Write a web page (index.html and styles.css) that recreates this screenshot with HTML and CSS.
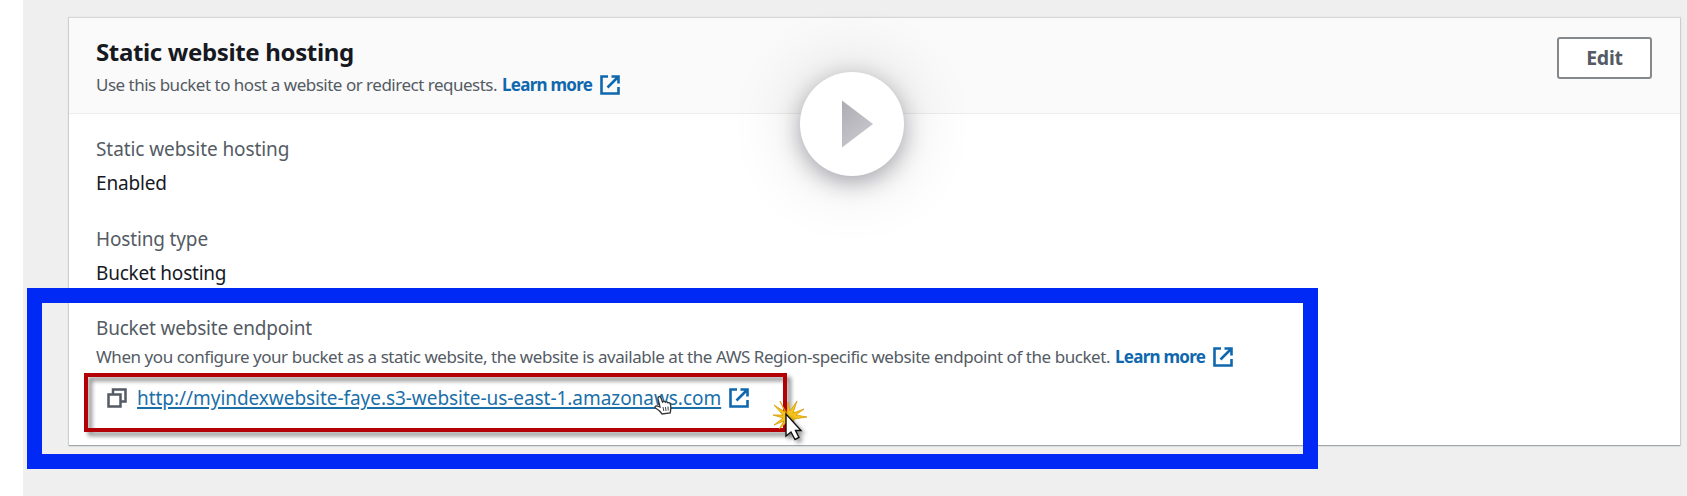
FILE: index.html
```html
<!DOCTYPE html>
<html lang="en">
<head>
<meta charset="utf-8">
<title>Static website hosting</title>
<link rel="stylesheet" href="styles.css">
</head>
<body>
<svg class="defs" width="0" height="0">
  <symbol id="external" viewBox="0 0 20 20"><path d="M8 1.500H1.500V18.500H18.500V12M11.500 1.500H18.500V8.500M18 2L7.500 12.500" fill="none" stroke="currentColor" stroke-width="2.6"/></symbol>
</svg>
<main class="page">
  <section class="card">
    <header class="card-header">
      <div>
        <h1 class="title">Static website hosting</h1>
        <p class="desc"><span class="desc-a">Use this bucket to host a website or redirect requests.</span><a class="more">Learn more</a><svg class="ext"><use href="#external"/></svg></p>
      </div>
      <button class="edit">Edit</button>
    </header>
    <div class="card-body">
      <div class="field">
        <div class="label label-a">Static website hosting</div>
        <div class="value">Enabled</div>
      </div>
      <div class="field">
        <div class="label">Hosting type</div>
        <div class="value value-b">Bucket hosting</div>
      </div>
      <div class="field field-endpoint">
        <div class="label label-c">Bucket website endpoint</div>
        <p class="desc"><span class="desc-b">When you configure your bucket as a static website, the website is available at the AWS Region-specific website endpoint of the bucket.</span><a class="more">Learn more</a><svg class="ext"><use href="#external"/></svg></p>
        <div class="endpoint">
          <svg class="copy" viewBox="0 0 20 20"><path d="M1.500 6.500H13.500V18.500H1.500ZM6 6V1.500H18.500V13.500H14" fill="none" stroke="currentColor" stroke-width="2.5"/></svg>
          <a class="url">http://myindexwebsite-faye.s3-website-us-east-1.amazonaws.com</a>
          <svg class="ext"><use href="#external"/></svg>
        </div>
      </div>
    </div>
  </section>
</main>
<div class="blue-frame"></div>
<div class="red-frame"></div>
<div class="play"><svg width="104" height="104" viewBox="0 0 104 104"><defs><linearGradient id="tri" x1="0" y1="0" x2="0.6" y2="1"><stop offset="0" stop-color="#acacb2"/><stop offset="1" stop-color="#c8c8ce"/></linearGradient></defs><path d="M42 28.500L73 52L42 75.500Z" fill="url(#tri)"/></svg></div>
<svg class="hand" viewBox="0 0 18 20"><path d="M4.500 2C5.500 1 6.500 1.500 7 3L8.500 7C9.500 6 11 6.300 11.400 7.200C12.300 6.500 13.500 6.800 14 7.800C15.200 7.300 16.200 8 16.500 9.500C17 12 17 14 16.200 18L8 19C6.500 16 4 14.500 1.500 13C.5 12 1.500 10.700 3 11L6 12L4 4C3.800 3 4 2.500 4.500 2Z" fill="#fff" stroke="#333" stroke-width="1.3"/><path d="M9 12L9.800 16M11.500 12L12 16M14 11.500L14.200 15.500" stroke="#444"/></svg>
<svg class="click" viewBox="0 0 42 46"><path d="M14 13L7 0L12 11L1 4L10 14L0 14L10 17L1 24L11 20L6 28L14 21L20 26L21 18L34 16L23 14L31 8L20 12L24 0L17 10L15 1Z" fill="#f6c51c" stroke="#d79b08" stroke-width=".8"/><path class="arrow" d="M13 13V35L18 31L22 38.500L26 36.500L22.500 29.500H28Z" fill="#fff" stroke="#111" stroke-width="1.4"/></svg>
</body>
</html>
```
FILE: styles.css
```css
* { box-sizing: border-box; }
body { margin: 0; width: 1687px; height: 496px; overflow: hidden; position: relative; background: #fff; font-family: "Noto Sans", "Open Sans", sans-serif; color: #16191f; }
.defs { position: absolute; }
.page { height: 496px; margin-left: 23px; padding: 18px 7px 0 46px; background: #efefef; }
.card { height: 427px; background: #fff; box-shadow: 0 1px 1px 0 #a0a8a9, 0 0 1px 1px #d6d6d6; }
.card-header { display: flex; justify-content: space-between; align-items: flex-start; height: 96px; padding: 18px 28px 0 27px; background: #fafafa; border-bottom: 1px solid #ececec; }
.title { margin: 0; font-size: 24px; line-height: 32px; font-weight: 700; letter-spacing: -0.35px; }
.desc { display: flex; align-items: center; margin: 5px 0 0; height: 24px; line-height: 24px; font-size: 17px; color: #545b64; white-space: nowrap; }
.desc-a { letter-spacing: -0.5px; width: 406px; }
.desc-b { letter-spacing: -0.45px; width: 1019px; }
.more { font-weight: 700; color: #0f68ae; letter-spacing: -0.73px; width: 98px; }
.ext { width: 20px; height: 20px; color: #0f68ae; flex: none; }
.edit { width: 95px; height: 42px; margin-top: 1px; padding: 0; border: 2px solid #85888b; border-radius: 3px; background: #fff; font: 700 19.5px/38px "Noto Sans", sans-serif; letter-spacing: -0.2px; color: #545b64; }
.card-body { display: flex; flex-direction: column; gap: 28px; padding: 21px 28px 0 27px; }
.field { white-space: nowrap; }
.field-endpoint { margin-top: -1px; }
.label, .value { height: 28px; line-height: 28px; font-size: 19px; letter-spacing: -0.15px; }
.label-a { letter-spacing: -0.08px; }
.label-c { letter-spacing: -0.2px; }
.value-b { letter-spacing: -0.22px; }
.label { color: #545b64; }
.value { margin-top: 6px; }
.field .desc { margin-top: 3px; }
.endpoint { display: flex; align-items: center; height: 28px; margin: 15px 0 0 11px; }
.copy { width: 20px; height: 20px; color: #545b64; }
.url { width: 592px; margin-left: 10px; font-size: 19px; line-height: 28px; letter-spacing: -0.05px; color: #1b6fa8; text-decoration: underline; text-decoration-thickness: 1.5px; text-underline-offset: 2px; }
.blue-frame { position: absolute; left: 27px; top: 288px; width: 1291px; height: 181px; border: 15px solid #0029f5; }
.red-frame { position: absolute; left: 84px; top: 373px; width: 703px; height: 59px; border: 4px solid #b20006; filter: drop-shadow(4px 4px 2px rgba(0,0,0,.45)); }
.play { position: absolute; left: 800px; top: 72px; width: 104px; height: 104px; border-radius: 50%; background: #fff; box-shadow: 0 6px 22px rgba(25,22,45,.34), 0 0 75px rgba(0,0,0,.16); }
.hand { position: absolute; left: 654px; top: 395px; width: 18px; height: 20px; }
.click { position: absolute; left: 773px; top: 401px; width: 42px; height: 46px; overflow: visible; }
.arrow { filter: drop-shadow(3px 3px 2px rgba(0,0,0,.4)); }
```
